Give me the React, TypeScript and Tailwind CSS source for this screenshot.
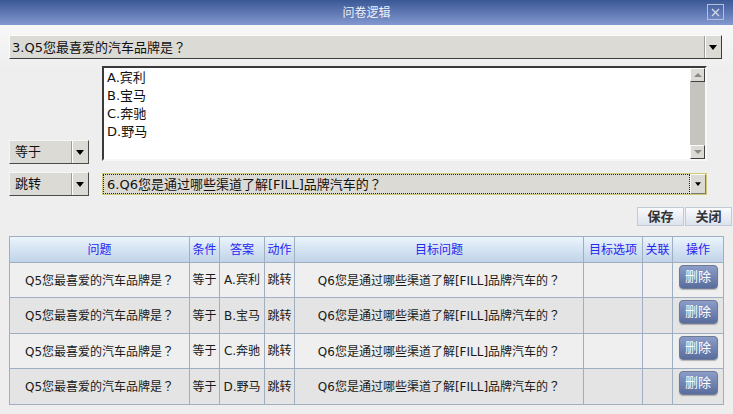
import React from "react";

const rows = [
  { answer: "A.宾利", bg: "bg-[#efefef]", h: "h-[35px]" },
  { answer: "B.宝马", bg: "bg-[#e4e4e4]", h: "h-[36px]" },
  { answer: "C.奔驰", bg: "bg-[#efefef]", h: "h-[35px]" },
  { answer: "D.野马", bg: "bg-[#e4e4e4]", h: "h-[36px]" },
];

const options = ["A.宾利", "B.宝马", "C.奔驰", "D.野马"];

// full-width question mark, centred in its box like the reference
function Qm() {
  return <span className="font-['Noto_Sans_CJK_TC',sans-serif]">？</span>;
}

function DownArrow({ size = 8 }: { size?: number }) {
  return (
    <svg width={size} height={size / 2 + 1} viewBox="0 0 8 5">
      <path d="M0 0h8L4 5z" fill="#000" />
    </svg>
  );
}

function SmallSelect({ label }: { label: string }) {
  return (
    <div className="flex h-[24px] w-[80px] border border-t-[#f6f6f6] border-l-[#f6f6f6] border-b-[#4a4a4a] border-r-[#4a4a4a] bg-[#dcdad5]">
      <span className="flex-1 pl-[5px] text-[13px] leading-[22px] text-[#111]">{label}</span>
      <span className="flex w-[17px] items-center justify-center border-l border-l-[#9c9c9c] shadow-[inset_1px_0_0_#fff]">
        <DownArrow />
      </span>
    </div>
  );
}

function ScrollButton({ up }: { up?: boolean }) {
  return (
    <div className="flex h-[14px] items-center justify-center border border-t-[#fafafa] border-l-[#fafafa] border-b-[#404040] border-r-[#404040] bg-[#dcdad5]">
      <svg width="8" height="4" viewBox="0 0 8 4">
        <path d={up ? "M0 4h8L4 0z" : "M0 0h8L4 4z"} fill="#8a8a8a" />
      </svg>
    </div>
  );
}

export default function App() {
  const th = "border border-[#9eafc1] p-0 text-center font-normal text-[#2626f0]";
  const td = "border border-[#9eafc1] p-0 text-center text-[#1a1a1a]";

  return (
    <div className="h-[414px] w-[733px] overflow-hidden bg-[#eeeeee] font-['DejaVu_Sans','Noto_Sans_CJK_SC',sans-serif]">
      {/* title bar */}
      <div className="relative flex h-[25px] items-center justify-center bg-gradient-to-b from-[#3b5896] to-[#8398cf]">
        <span className="text-[12px] text-[#eef1f8]">问卷逻辑</span>
        <div className="absolute right-[9px] top-[4px] flex h-[16px] w-[17px] items-center justify-center border border-[#b4c0da]">
          <svg width="9" height="9" viewBox="0 0 9 9">
            <path d="M1 1l7 7M8 1l-7 7" stroke="#d4dae8" strokeWidth="1.3" />
          </svg>
        </div>
      </div>

      <div className="bg-[linear-gradient(#f8f8f8,#eeeeee_45px)] pl-[9px] pr-[1px] pt-[10px]">
        {/* question select */}
        <div className="flex h-[24px] w-[713px] border border-t-[#fbfbfb] border-l-[#fbfbfb] border-b-[#3c3c3c] border-r-[#3c3c3c] bg-[#dcdad5]">
          <span className="flex-1 pl-[2px] text-[13px] leading-[22px] text-[#111]">
            3.Q5您最喜爱的汽车品牌是<Qm />
          </span>
          <span className="flex w-[17px] items-center justify-center border-l border-l-[#9c9c9c] shadow-[inset_1px_0_0_#fff]">
            <DownArrow />
          </span>
        </div>

        {/* condition + answers */}
        <div className="mt-[7px] flex h-[98px] gap-[13px]">
          <div className="flex flex-col justify-end">
            <SmallSelect label="等于" />
          </div>
          <div className="flex h-[95px] w-[605px] border-2 border-t-[#3a3a3a] border-l-[#3a3a3a] border-b-[#f8f8f8] border-r-[#f8f8f8] bg-white">
            <ul className="flex-1 pl-[3px] pt-[1px] text-[13px] leading-[18px] text-[#111]">
              {options.map((o) => (
                <li key={o}>{o}</li>
              ))}
            </ul>
            <div className="flex w-[15px] flex-col justify-between bg-[#c5c4be]">
              <ScrollButton up />
              <ScrollButton />
            </div>
          </div>
        </div>

        {/* action + target */}
        <div className="mt-[8px] flex items-center gap-[13px]">
          <SmallSelect label="跳转" />
          <div className="flex h-[22px] w-[605px] border border-[#cfcb72] bg-[#dcdad5]">
            <span className="flex-1 border border-dotted border-[#222] pl-[3px] text-[13px] leading-[18px] text-[#111]">
              6.Q6您是通过哪些渠道了解[FILL]品牌汽车的<Qm />
            </span>
            <span className="flex w-[16px] items-center justify-center border border-t-[#fafafa] border-l-[#fafafa] border-b-[#7a7a7a] border-r-[#7a7a7a]">
              <DownArrow size={6} />
            </span>
          </div>
        </div>

        {/* buttons */}
        <div className="mt-[11px] flex justify-end gap-[1px]">
          {["保存", "关闭"].map((b) => (
            <button
              key={b}
              type="button"
              className="h-[19px] w-[47px] border border-[#c2cad6] bg-gradient-to-b from-[#f8fafd] to-[#dce3ed] text-[13px] font-bold leading-[17px] text-[#333]"
            >
              {b}
            </button>
          ))}
        </div>

        {/* logic table */}
        <table className="mt-[10px] w-[714px] table-fixed border-collapse text-[12px]">
          <colgroup>
            <col className="w-[180px]" />
            <col className="w-[30px]" />
            <col className="w-[45px]" />
            <col className="w-[30px]" />
            <col className="w-[289px]" />
            <col className="w-[59px]" />
            <col className="w-[30px]" />
            <col className="w-[51px]" />
          </colgroup>
          <thead>
            <tr className="h-[26px] bg-gradient-to-b from-[#eaf4fc] to-[#bed2e8]">
              <th className={th}>问题</th>
              <th className={th}>条件</th>
              <th className={th}>答案</th>
              <th className={th}>动作</th>
              <th className={th}>目标问题</th>
              <th className={th}>目标选项</th>
              <th className={th}>关联</th>
              <th className={th}>操作</th>
            </tr>
          </thead>
          <tbody>
            {rows.map((r) => (
              <tr key={r.answer} className={`${r.h} ${r.bg}`}>
                <td className={td}>
                  Q5您最喜爱的汽车品牌是<Qm />
                </td>
                <td className={td}>等于</td>
                <td className={td}>{r.answer}</td>
                <td className={td}>跳转</td>
                <td className={td}>
                  Q6您是通过哪些渠道了解[FILL]品牌汽车的<Qm />
                </td>
                <td className={td}></td>
                <td className={td}></td>
                <td className={`${td} align-top pt-[2px]`}>
                  <button
                    type="button"
                    className="h-[24px] w-[39px] rounded-[4px] border border-[#6d7a98] bg-gradient-to-b from-[#8b9dc7] to-[#596d9d] text-[13px] leading-[22px] text-white shadow-[0_1px_1px_rgba(0,0,0,0.25)]"
                  >
                    删除
                  </button>
                </td>
              </tr>
            ))}
          </tbody>
        </table>
      </div>
    </div>
  );
}
